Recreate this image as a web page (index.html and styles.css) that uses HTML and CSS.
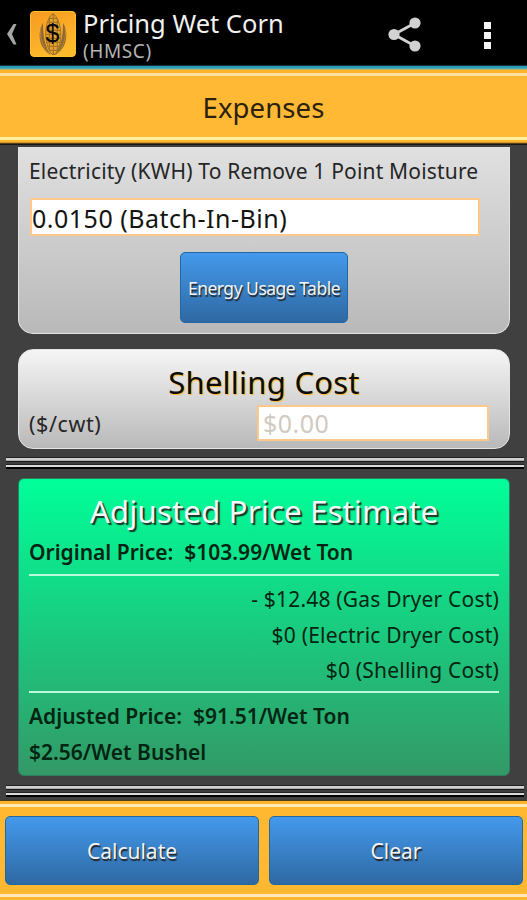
FILE: index.html
```html
<!DOCTYPE html>
<html lang="en">
<head>
    <meta charset="UTF-8">
    <meta name="viewport" content="width=device-width, initial-scale=1.0">
    <title>Pricing Wet Corn</title>
    <link rel="stylesheet" href="styles.css">
</head>
<body>
    <div class="app">
        <header class="action-bar">
            <svg class="back" width="12" height="24" viewBox="0 0 12 24">
                <path d="M11.500 2L8.500 2L2 12L8.500 22.500L11.500 22.500L7 12z" fill="#a5a5a5"/>
            </svg>
            <svg class="logo" width="46" height="46" viewBox="0 0 46 46">
                <defs>
                    <linearGradient id="gold" x1="0" y1="0" x2="0.4" y2="1">
                        <stop offset="0" stop-color="#f79a20"/>
                        <stop offset="1" stop-color="#fdba2c"/>
                    </linearGradient>
                    <pattern id="kernels" width="4" height="4" patternUnits="userSpaceOnUse">
                        <rect width="4" height="4" fill="#a87622"/>
                        <rect width="2.8" height="2.8" fill="#e3a22e"/>
                    </pattern>
                </defs>
                <rect x="0.5" y="0.5" width="45" height="45" rx="3.5" fill="url(#gold)" stroke="#ffc02e"/>
                <path d="M23 2.500C14 9 13 33 22 43.500h3C34 33 32 9 23 2.500z" fill="url(#kernels)" stroke="#8d6426" stroke-width="0.8"/>
                <path d="M13 12C8 20 7 36 21 44C15 36 13 25 13 12z" fill="#8f692f"/>
                <path d="M33 12C38 20 39 36 25 44C31 36 33 25 33 12z" fill="#8f692f"/>
                <path d="M11 17C9 26 13 37 19 42M35 17C37 26 33 37 27 42" fill="none" stroke="#c18c32" stroke-width="0.8"/>
                <text class="logo-dollar" x="22.500" y="31" text-anchor="middle">$</text>
            </svg>
            <div class="title">
                <h1>Pricing Wet Corn</h1>
                <p>(HMSC)</p>
            </div>
            <svg class="share" width="34" height="36" viewBox="0 0 34 36">
                <path d="M27 6 L6 17.500 L27 29" fill="none" stroke="#d2d2d2" stroke-width="2.800"/>
                <circle cx="27" cy="6" r="5.600" fill="#d2d2d2"/>
                <circle cx="6" cy="17.500" r="5.600" fill="#d2d2d2"/>
                <circle cx="27" cy="29" r="5.600" fill="#d2d2d2"/>
            </svg>
            <div class="overflow">
                <span></span>
                <span></span>
                <span></span>
            </div>
        </header>

        <div class="section-title">
            <h2>Expenses</h2>
        </div>

        <main class="content">
            <section class="card card-electricity">
                <label class="label-kwh" for="kwh">Electricity (KWH) To Remove 1 Point Moisture</label>
                <input class="field field-kwh" id="kwh" type="text" value="0.0150 (Batch-In-Bin)">
                <button class="btn btn-table">Energy Usage Table</button>
            </section>

            <section class="card card-shelling">
                <h3>Shelling Cost</h3>
                <div class="row">
                    <label class="label-cwt" for="shelling">($/cwt)</label>
                    <input class="field field-shelling" id="shelling" type="text" placeholder="$0.00">
                </div>
            </section>

            <div class="divider"></div>

            <section class="estimate">
                <h3>Adjusted Price Estimate</h3>
                <p class="total">Original Price:&nbsp; $103.99/Wet Ton</p>
                <div class="costs">
                    <p>- $12.48 (Gas Dryer Cost)</p>
                    <p>$0 (Electric Dryer Cost)</p>
                    <p>$0 (Shelling Cost)</p>
                </div>
                <p class="total">Adjusted Price:&nbsp; $91.51/Wet Ton</p>
                <p class="total">$2.56/Wet Bushel</p>
            </section>

            <div class="divider divider-bottom"></div>
        </main>

        <footer class="actions">
            <button class="btn">Calculate</button>
            <button class="btn">Clear</button>
        </footer>
    </div>
</body>
</html>
```
FILE: styles.css
```css
*{
    margin: 0;
    padding: 0;
    box-sizing: border-box;
    font-family: "Noto Sans", "Open Sans", sans-serif;
}

body{
    background-color: #404040;
}

.app{
    width: 527px;
    height: 900px;
    display: flex;
    flex-direction: column;
    overflow: hidden;
    white-space: nowrap;
}

/* top bar */
.action-bar{
    height: 70px;
    flex: none;
    display: flex;
    align-items: flex-start;
    background: linear-gradient(#000 0 65px, #15303a 65px 66px, #2a9dbd 66px 68px, #4fafb4 68px 69px, #b8ae62 69px);
}

.back{
    margin: 22px 0 0 5px;
}

.logo{
    margin: 11px 0 0 13px;
}

.logo-dollar{
    font-family: "Liberation Sans", sans-serif;
    font-size: 25px;
    fill: #080808;
}

.title{
    width: 300px;
    padding: 5px 0 0 7px;
}

.title h1{
    font-size: 25.500px;
    line-height: 36px;
    font-weight: 400;
    color: #f1f1f1;
}

.title p{
    font-size: 19px;
    line-height: 20px;
    letter-spacing: 0.6px;
    color: #b4b4b4;
}

.share{
    margin: 17px 0 0 12px;
}

.overflow{
    margin: 22px 0 0 62px;
    display: grid;
    gap: 3px;
}

.overflow span{
    width: 7px;
    height: 7px;
    background-color: #f4f4f4;
}

.section-title{
    height: 74px;
    flex: none;
    text-align: center;
    background: linear-gradient(#fdb62c 0 3px, #ffe0a0 3px 6px, #ffb935 6px 67px, #fff0a0 67px 70px, #ffb52c 70px 72px, #d7962a 72px 73px, #55401c 73px);
}

.section-title h2{
    font-size: 27.500px;
    font-weight: 400;
    line-height: 76px;
    letter-spacing: 0.1px;
    color: #2b210d;
}

/* scrolling area */
.content{
    height: 656px;
    flex: none;
    padding: 2px 17px 0 18px;
    border-top: 1px solid #151515;
}

.card{
    border: 1px solid #e4e4e4;
    border-radius: 15px;
}

.card-electricity{
    height: 187px;
    padding: 0 10px;
    border-top: none;
    border-radius: 0 0 15px 15px;
    background: linear-gradient(#e0e0e0, #b9b9b9);
    display: flex;
    flex-direction: column;
}

.label-kwh{
    font-size: 21px;
    line-height: 48px;
    letter-spacing: 0.18px;
    color: #262626;
}

.field{
    border: 2px solid #fbc98c;
    background-color: #fff;
    outline: none;
    font-size: 25px;
    letter-spacing: 0.5px;
    color: #151510;
}

.field-kwh{
    width: 450px;
    height: 38px;
    margin-top: 3px;
    margin-left: 1px;
    padding-top: 2px;
}

.btn{
    border: 1px solid #2367a5;
    border-radius: 5px;
    background: linear-gradient(#4499ec, #2e69a3);
    color: #f3f3f3;
    font-size: 21px;
    text-shadow: 1px 2px 1px #222;
}

.btn-table{
    width: 168px;
    height: 71px;
    margin: 16px 0 0 151px;
    font-size: 17.500px;
    letter-spacing: -0.5px;
}

.card-shelling{
    height: 100px;
    margin-top: 15px;
    padding: 0 10px;
    background: linear-gradient(#f5f5f5, #b9b9b9);
}

.card-shelling h3{
    text-align: center;
    font-size: 31px;
    font-weight: 400;
    line-height: 64px;
    height: 55px;
    letter-spacing: 0.25px;
    color: #0c0c0c;
    text-shadow: 1px 1px 1px #fdb62c;
}

.row{
    display: flex;
    justify-content: space-between;
    padding-right: 10px;
}

.label-cwt{
    font-size: 21.500px;
    line-height: 38px;
    letter-spacing: 0.6px;
    color: #262626;
}

.field-shelling{
    width: 232px;
    height: 36px;
    padding-left: 4px;
}

.field::placeholder{
    color: #d0cac0;
    opacity: 1;
}

.divider{
    height: 12px;
    margin: 8px -14px 0 -12px;
    background: linear-gradient(#222 0 1px, #d0d0d0 1px 3px, #aaa 3px 4px, #1a1a1a 4px 5px, #3c3c3c 5px 7px, #222 7px 8px, #d8d8d8 8px 10px, #000 10px 12px);
}

.estimate{
    height: 298px;
    margin-top: 9px;
    padding: 0 10px;
    border: 1px solid #2f7d5c;
    border-radius: 6px;
    background: linear-gradient(#00ff99, #339966);
    color: #022513;
}

.estimate h3{
    text-align: center;
    font-size: 31.500px;
    font-weight: 400;
    line-height: 63px;
    height: 55px;
    color: #f6f6f6;
    text-shadow: 2px 2px 1px #1d3328;
}

.total{
    font-size: 21px;
    font-weight: 600;
    line-height: 36px;
}

.costs{
    margin-top: 4px;
    margin-bottom: 5px;
    padding-top: 6px;
    height: 119px;
    border-top: 2px solid #b9fbdc;
    border-bottom: 2px solid #b9fbdc;
    text-align: right;
    font-size: 21px;
    line-height: 35.500px;
    letter-spacing: 0.2px;
}

.divider-bottom{
    margin-top: 9px;
}

/* bottom buttons */
.actions{
    height: 100px;
    flex: none;
    padding: 16px 4px 15px 5px;
    display: flex;
    gap: 10px;
    background: linear-gradient(#4a421f 0 1px, #fcb42c 1px 4px, #ffe9b8 4px 7px, #ffb82f 7px 94px, #ffe9b8 94px 97px, #ffb52c 97px);
}

.actions .btn{
    flex: 1;
}
```
